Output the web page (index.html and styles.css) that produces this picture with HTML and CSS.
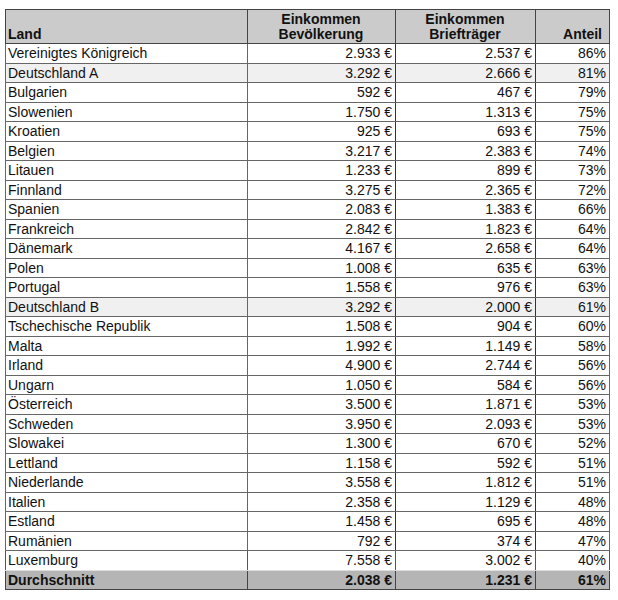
FILE: index.html
```html
<!DOCTYPE html>
<html lang="de">
<head>
<meta charset="utf-8">
<link rel="stylesheet" href="styles.css">
</head>
<body>
<table class="tbl">
<colgroup><col class="c1"><col class="c2"><col class="c3"><col class="c4"></colgroup>
<thead>
<tr><th class="l">Land</th><th>Einkommen<br>Bevölkerung</th><th>Einkommen<br>Briefträger</th><th class="r">Anteil</th></tr>
</thead>
<tbody>
<tr><td>Vereinigtes Königreich</td><td>2.933 €</td><td>2.537 €</td><td>86%</td></tr>
<tr class="hl"><td>Deutschland A</td><td>3.292 €</td><td>2.666 €</td><td>81%</td></tr>
<tr><td>Bulgarien</td><td>592 €</td><td>467 €</td><td>79%</td></tr>
<tr><td>Slowenien</td><td>1.750 €</td><td>1.313 €</td><td>75%</td></tr>
<tr><td>Kroatien</td><td>925 €</td><td>693 €</td><td>75%</td></tr>
<tr><td>Belgien</td><td>3.217 €</td><td>2.383 €</td><td>74%</td></tr>
<tr><td>Litauen</td><td>1.233 €</td><td>899 €</td><td>73%</td></tr>
<tr><td>Finnland</td><td>3.275 €</td><td>2.365 €</td><td>72%</td></tr>
<tr><td>Spanien</td><td>2.083 €</td><td>1.383 €</td><td>66%</td></tr>
<tr><td>Frankreich</td><td>2.842 €</td><td>1.823 €</td><td>64%</td></tr>
<tr><td>Dänemark</td><td>4.167 €</td><td>2.658 €</td><td>64%</td></tr>
<tr><td>Polen</td><td>1.008 €</td><td>635 €</td><td>63%</td></tr>
<tr><td>Portugal</td><td>1.558 €</td><td>976 €</td><td>63%</td></tr>
<tr class="hl"><td>Deutschland B</td><td>3.292 €</td><td>2.000 €</td><td>61%</td></tr>
<tr><td>Tschechische Republik</td><td>1.508 €</td><td>904 €</td><td>60%</td></tr>
<tr><td>Malta</td><td>1.992 €</td><td>1.149 €</td><td>58%</td></tr>
<tr><td>Irland</td><td>4.900 €</td><td>2.744 €</td><td>56%</td></tr>
<tr><td>Ungarn</td><td>1.050 €</td><td>584 €</td><td>56%</td></tr>
<tr><td>Österreich</td><td>3.500 €</td><td>1.871 €</td><td>53%</td></tr>
<tr><td>Schweden</td><td>3.950 €</td><td>2.093 €</td><td>53%</td></tr>
<tr><td>Slowakei</td><td>1.300 €</td><td>670 €</td><td>52%</td></tr>
<tr><td>Lettland</td><td>1.158 €</td><td>592 €</td><td>51%</td></tr>
<tr><td>Niederlande</td><td>3.558 €</td><td>1.812 €</td><td>51%</td></tr>
<tr><td>Italien</td><td>2.358 €</td><td>1.129 €</td><td>48%</td></tr>
<tr><td>Estland</td><td>1.458 €</td><td>695 €</td><td>48%</td></tr>
<tr><td>Rumänien</td><td>792 €</td><td>374 €</td><td>47%</td></tr>
<tr class="lux"><td>Luxemburg</td><td>7.558 €</td><td>3.002 €</td><td>40%</td></tr>
<tr class="sum"><td>Durchschnitt</td><td>2.038 €</td><td>1.231 €</td><td>61%</td></tr>
</tbody>
</table>
</body>
</html>
```
FILE: styles.css
```css
html, body { margin: 0; padding: 0; background: #fff; }
body { padding: 9px 0 0 5px; }
.tbl {
  border-collapse: collapse;
  table-layout: fixed;
  width: 604px;
  font-family: "Liberation Sans", Arial, sans-serif;
  font-size: 14px;
  color: #111;
}
.c1 { width: 242px; }
.c2 { width: 148px; }
.c3 { width: 140px; }
.c4 { width: 74px; }
.tbl th, .tbl td {
  border: 1px solid #555;
  padding: 0 3px 0 2px;
  overflow: hidden;
  white-space: nowrap;
}
.tbl th {
  background: #cbcbcb;
  height: 32px;
  font-weight: bold;
  text-align: center;
  vertical-align: bottom;
  line-height: 15px;
  padding-bottom: 1px;
  border-color: #444;
}
.tbl th.l { text-align: left; }
.tbl th.r { text-align: right; padding-right: 7px; }
.tbl td {
  height: 18.5px;
  line-height: 18px;
  text-align: right;
  border-color: #666;
}
.tbl td:first-child { text-align: left; }
.tbl td:nth-child(2), .tbl td:nth-child(3) { border-left-color: #333; border-right-color: #333; }
.tbl tr.hl td { background: #f0f0f0; }
.tbl tr.lux td { border-color: #ddd; border-left-color: #555; border-right-color: #555; }
.tbl tr.sum td {
  background: #b5b5b5;
  font-weight: bold;
  border-color: #444;
}
```
